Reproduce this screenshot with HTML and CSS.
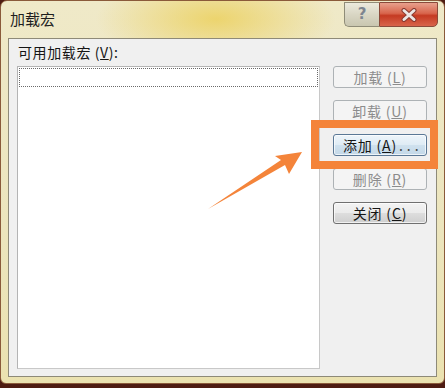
FILE: index.html
```html
<!DOCTYPE html>
<html lang="zh">
<head>
<meta charset="utf-8">
<title>加载宏</title>
<link rel="stylesheet" href="styles.css">
</head>
<body>
<div class="window">
  <div class="titlebar">
    <span class="title">加载宏</span>
    <div class="caption">
      <div class="cap-help">?</div>
      <div class="cap-close">
        <svg width="20" height="14" viewBox="0 0 20 14">
          <path d="M5 2.5 L15 11.5 M15 2.5 L5 11.5" stroke="#8a3a30" stroke-width="5" stroke-linecap="round"/>
          <path d="M5 2.5 L15 11.5 M15 2.5 L5 11.5" stroke="#ece6e4" stroke-width="3" stroke-linecap="round"/>
        </svg>
      </div>
    </div>
  </div>
  <div class="client">
    <div class="label">可用加载宏 (<u>V</u>):</div>
    <div class="listbox"><div class="focusrow"></div></div>
    <div class="buttons">
      <div class="btn disabled">加载 (<u>L</u>)</div>
      <div class="btn disabled">卸载 (<u>U</u>)</div>
      <div class="btn focus">添加 (<u>A</u>)<span class="dots">...</span></div>
      <div class="btn disabled">删除 (<u>R</u>)</div>
      <div class="btn">关闭 (<u>C</u>)</div>
    </div>
  </div>
  <div class="highlight"></div>
  <svg class="arrow" width="445" height="388" viewBox="0 0 445 388">
    <polygon points="208,209 281,160 275,156 302,152 289,174 285,165" fill="#f4843a"/>
  </svg>
</div>
</body>
</html>
```
FILE: styles.css
```css
* { box-sizing: border-box; }
html, body {
  margin: 0;
  padding: 0;
  width: 445px;
  height: 388px;
  overflow: hidden;
  background: #4e1c12;
  font-family: "Noto Sans CJK SC", "Noto Sans", sans-serif;
}
.window {
  position: relative;
  width: 445px;
  height: 384px;
  border: 1px solid #8a5a3a;
  border-radius: 7px 7px 6px 6px;
  background:
    radial-gradient(ellipse 120px 45px at 215px 18px, rgba(236,210,100,0.9), rgba(236,210,100,0) 100%),
    linear-gradient(#efe9c8, #ece5bd 60%, #ebe2b0);
  padding: 0 7px 6px 7px;
  display: flex;
  flex-direction: column;
}
.titlebar {
  height: 37px;
  display: flex;
  justify-content: space-between;
  align-items: flex-start;
}
.title {
  margin-top: 8px;
  margin-left: 2px;
  font-size: 15px;
  line-height: 20px;
  color: #1e1e1e;
}
.caption {
  display: flex;
  margin-right: -1px;
  margin-top: 1px;
  height: 25px;
}
.cap-help {
  width: 35px;
  height: 25px;
  border: 1px solid #8f8c78;
  border-right: none;
  border-radius: 0 0 0 5px;
  background: linear-gradient(#eceadd, #d9d6c4 50%, #c9c6b0);
  color: #7d8590;
  font-family: "DejaVu Sans", sans-serif;
  font-weight: bold;
  font-size: 15px;
  line-height: 22px;
  text-align: center;
}
.cap-close {
  width: 59px;
  height: 25px;
  border: 1px solid #8a4a3a;
  border-radius: 0 0 5px 0;
  background: linear-gradient(#e8a08c, #d8654c 45%, #c53a22 55%, #d8644a);
  display: flex;
  align-items: center;
  justify-content: center;
}
.client {
  flex: 1;
  border: 1px solid #8e8a78;
  background: #f0f0f0;
  padding: 4px 9px 7px 8px;
  display: grid;
  grid-template-columns: 303px 94px;
  grid-template-rows: 18px 1fr;
  column-gap: 13px;
  row-gap: 5px;
}
.label {
  grid-column: 1;
  grid-row: 1;
  font-size: 14px;
  line-height: 18px;
  color: #151515;
  padding-left: 1px;
  letter-spacing: 0.6px;
}
.listbox {
  grid-column: 1;
  grid-row: 2;
  background: #ffffff;
  border: 1px solid #b4b4b4;
  border-right-color: #c8c8c8;
  border-bottom-color: #c8c8c8;
  padding: 1px 1px;
}
.focusrow {
  height: 19px;
  border: 1px dotted #6a6a6a;
}
.buttons {
  grid-column: 2;
  grid-row: 2;
  display: flex;
  flex-direction: column;
  gap: 12px;
}
.btn {
  height: 22px;
  border: 1px solid #707070;
  border-radius: 3px;
  background: linear-gradient(#f3f3f3, #ebebeb 48%, #dddddd 52%, #cfcfcf);
  box-shadow: inset 0 0 0 1px rgba(255,255,255,0.7);
  font-size: 14px;
  line-height: 20px;
  text-align: center;
  color: #151515;
  letter-spacing: 0.8px;
}
.btn.disabled {
  border-color: #adb2b5;
  background: #f4f4f4;
  box-shadow: none;
  color: #8c8c8c;
}
.btn.focus {
  border-color: #5a7896;
  background: linear-gradient(#eef5fa, #dfecf5 48%, #cfe1ee 52%, #c3d8e8);
  padding-left: 9px;
  text-align: left;
}
.dots {
  letter-spacing: 4px;
  margin-left: 2px;
  color: #444;
}
.highlight {
  position: absolute;
  left: 310px;
  top: 119px;
  width: 127px;
  height: 49px;
  border: 8px solid #f4843a;
}
.arrow {
  position: absolute;
  left: -1px;
  top: -1px;
  pointer-events: none;
}
```
